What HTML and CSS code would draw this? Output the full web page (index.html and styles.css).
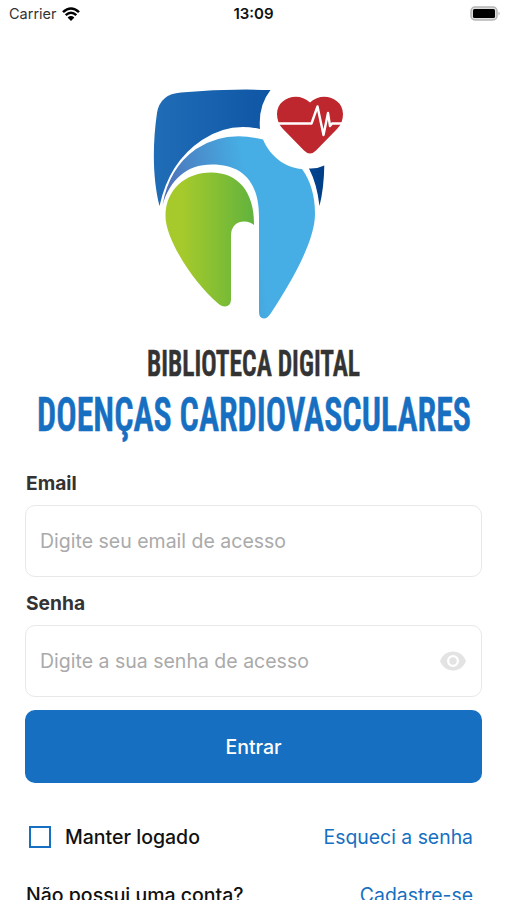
FILE: index.html
```html
<!DOCTYPE html>
<html lang="pt-BR">
<head>
    <meta charset="UTF-8">
    <meta name="viewport" content="width=device-width, initial-scale=1.0">
    <title>Biblioteca Digital - Doenças Cardiovasculares</title>
    <link rel="stylesheet" href="styles.css">
</head>
<body>
    <header class="status-bar">
        <div class="carrier">
            <span>Carrier</span>
            <svg class="wifi" viewBox="0 0 18 14">
                <path d="M1 5.1Q9-2.1 17 5.1M3.700 8.100Q9 3.400 14.300 8.100" fill="none" stroke="#000" stroke-width="2.600"/>
                <path d="M5.600 10.500Q9 7.600 12.400 10.500L9 13.900z"/>
            </svg>
        </div>
        <span class="time">13:09</span>
        <svg class="battery" viewBox="0 0 31 16">
            <rect x="1" y="1" width="26" height="13" rx="4" fill="#ddd" stroke="#b5b5b5" stroke-width="1.500"/>
            <rect x="3" y="3" width="22" height="9" rx="1.500"/>
            <path d="M28.500 5.500q2.500 2 0 4z" fill="#b5b5b5"/>
        </svg>
    </header>

    <main class="login">
        <svg class="logo" viewBox="25 80 457 365">
            <defs>
                <linearGradient id="navy" gradientUnits="userSpaceOnUse" x1="154" y1="0" x2="324" y2="0">
                    <stop offset="0" stop-color="#206db7"/>
                    <stop offset=".65" stop-color="#1057a6"/>
                    <stop offset="1" stop-color="#003e87"/>
                </linearGradient>
                <linearGradient id="sky" gradientUnits="userSpaceOnUse" x1="160" y1="200" x2="248" y2="185">
                    <stop offset="0" stop-color="#4f69b5"/>
                    <stop offset=".35" stop-color="#4b85c6"/>
                    <stop offset="1" stop-color="#46aee4"/>
                </linearGradient>
                <linearGradient id="green" gradientUnits="userSpaceOnUse" x1="166" y1="0" x2="254" y2="0">
                    <stop offset=".18" stop-color="#a6ca2b"/>
                    <stop offset="1" stop-color="#61b33d"/>
                </linearGradient>
            </defs>

            <!-- shield -->
            <path fill="url(#navy)" d="M159.500 206C153 181 152 147 157 113Q160 94 181 92.500Q225 88.500 270.500 90Q258 106 260 129Q229 122 202 140Q169 162 159.500 206z"/>
            <path fill="url(#navy)" d="M309 168.500Q317 169 324.300 165.500Q324 188 319.500 206Q317 184 309 168.500z"/>
            <path fill="url(#sky)" d="M162.500 205Q169 168 196 149Q225 130 263 139.500C270 156 285 168 302 169Q315 187 315 214C315 242 290 284 271 313Q267.500 318.500 264 318.500Q259 318 259 312V217C259 180 241 164.500 212 164.500C186 164.500 170 180 162.500 205z"/>
            <path fill="url(#green)" d="M165.500 216C165.500 190 185 172.500 211 172.500C239 172.500 254.500 193 254 225Q250 221.500 244.500 221.500Q231 222 231 236V300Q230.500 306 225 306.500Q221 306.500 217 302.500C198 287 165.500 242 165.500 216z"/>

            <!-- heart -->
            <path fill="#be272d" d="M310 102.500C298 91 277 98 277 114Q277 123 283 129L304 150.500Q310 156.500 316 150.500L337 129Q343 123 343 114C343 98 322 91 310 102.500z"/>
            <path fill="none" stroke="#fff" stroke-width="2.400" stroke-linejoin="round" d="M278 123.500H311.500L317.500 106.500L323.500 135L328 113L330 126L332 123.500H342"/>

            <text class="logo-top" x="147" y="376" textLength="213" lengthAdjust="spacingAndGlyphs">BIBLIOTECA DIGITAL</text>
            <text class="logo-bottom" x="37" y="431" textLength="434" lengthAdjust="spacingAndGlyphs">DOENÇAS CARDIOVASCULARES</text>
        </svg>

        <form class="form">
            <label class="label" for="email">Email</label>
            <div class="field">
                <input id="email" class="input" type="text" placeholder="Digite seu email de acesso">
            </div>

            <label class="label" for="senha">Senha</label>
            <div class="field">
                <input id="senha" class="input" type="password" placeholder="Digite a sua senha de acesso">
                <svg class="eye" viewBox="0 0 26 20">
                    <path fill="#e3e3e3" fill-rule="evenodd" d="M13 .5C7 .5 2.200 4.200 0 10c2.200 5.800 7 9.500 13 9.500S23.800 15.800 26 10C23.800 4.200 19 .5 13 .5zM13 16a6 6 0 1 1 0-12a6 6 0 0 1 0 12zM13 6.300a3.700 3.700 0 1 0 0 7.400a3.700 3.700 0 0 0 0-7.400z"/>
                </svg>
            </div>

            <button class="submit" type="button">Entrar</button>
        </form>

        <div class="row">
            <label class="remember">
                <input class="checkbox" type="checkbox">
                <span>Manter logado</span>
            </label>
            <a class="link" href="#">Esqueci a senha</a>
        </div>
        <div class="row row-signup">
            <span>Não possui uma conta?</span>
            <a class="link" href="#">Cadastre-se</a>
        </div>
    </main>
</body>
</html>
```

FILE: styles.css
```css
:root {
    --blue: #166fc1;
    --dark: #333;
    --border: #e8e8e8;
}

* {
    margin: 0;
    padding: 0;
    box-sizing: border-box;
}

body {
    font-family: Inter, "Liberation Sans", sans-serif;
    background: #fff;
    color: #111;
    height: 900px;
    overflow: hidden;
}

.status-bar {
    display: grid;
    grid-template-columns: 1fr auto 1fr;
    align-items: center;
    height: 27px;
    padding: 0 6px 0 9px;
    font-size: 15px;
}

.carrier {
    display: flex;
    align-items: center;
    gap: 5px;
    font-size: 14.5px;
    color: #333;
}

.wifi {
    width: 18px;
    height: 14px;
}

.time {
    margin-right: 3px;
    font-size: 15px;
    font-weight: 600;
}

.battery {
    width: 31px;
    height: 16px;
    justify-self: end;
}

.login {
    padding: 53px 25px 0;
}

.logo {
    display: block;
    width: 457px;
    height: 365px;
}

.logo-top,
.logo-bottom {
    font-family: Roboto, sans-serif;
    font-stretch: 75%;
    font-weight: 600;
    stroke-width: .6px;
}

.logo-top {
    font-size: 36.5px;
    fill: #333;
    stroke: #333;
}

.logo-bottom {
    font-size: 48.5px;
    fill: var(--blue);
    stroke: var(--blue);
}

.form {
    display: flex;
    flex-direction: column;
    padding-top: 26px;
}

.label {
    height: 24px;
    line-height: 25px;
    margin-bottom: 10px;
    padding-left: 1px;
    font-size: 19.2px;
    font-weight: 700;
    color: var(--dark);
}

.field {
    display: flex;
    align-items: center;
    height: 72px;
    margin-bottom: 14px;
    padding: 0 15px 0 14px;
    border: 1.5px solid var(--border);
    border-radius: 10px;
}

.input {
    flex: 1;
    min-width: 0;
    border: none;
    outline: none;
    background: none;
    font-family: inherit;
    font-size: 19.5px;
}

.input::placeholder {
    color: #aaa;
}

.eye {
    width: 26px;
    height: 20px;
}

.submit {
    height: 73px;
    margin-top: -1px;
    border: none;
    border-radius: 10px;
    background: var(--blue);
    color: #fff;
    font-family: inherit;
    font-size: 19.5px;
    font-weight: 500;
}

.row {
    display: flex;
    align-items: center;
    justify-content: space-between;
    height: 24px;
    margin-top: 42px;
    padding: 0 9px 0 4px;
    font-size: 19.5px;
    font-weight: 500;
}

.row-signup {
    margin-top: 34px;
    padding-left: 1px;
}

.remember {
    display: flex;
    align-items: center;
    gap: 14px;
}

.checkbox {
    appearance: none;
    width: 22px;
    height: 22px;
    border: 2px solid var(--blue);
}

.link {
    color: var(--blue);
    font-size: 19.4px;
    font-weight: 400;
    text-decoration: none;
}
```
